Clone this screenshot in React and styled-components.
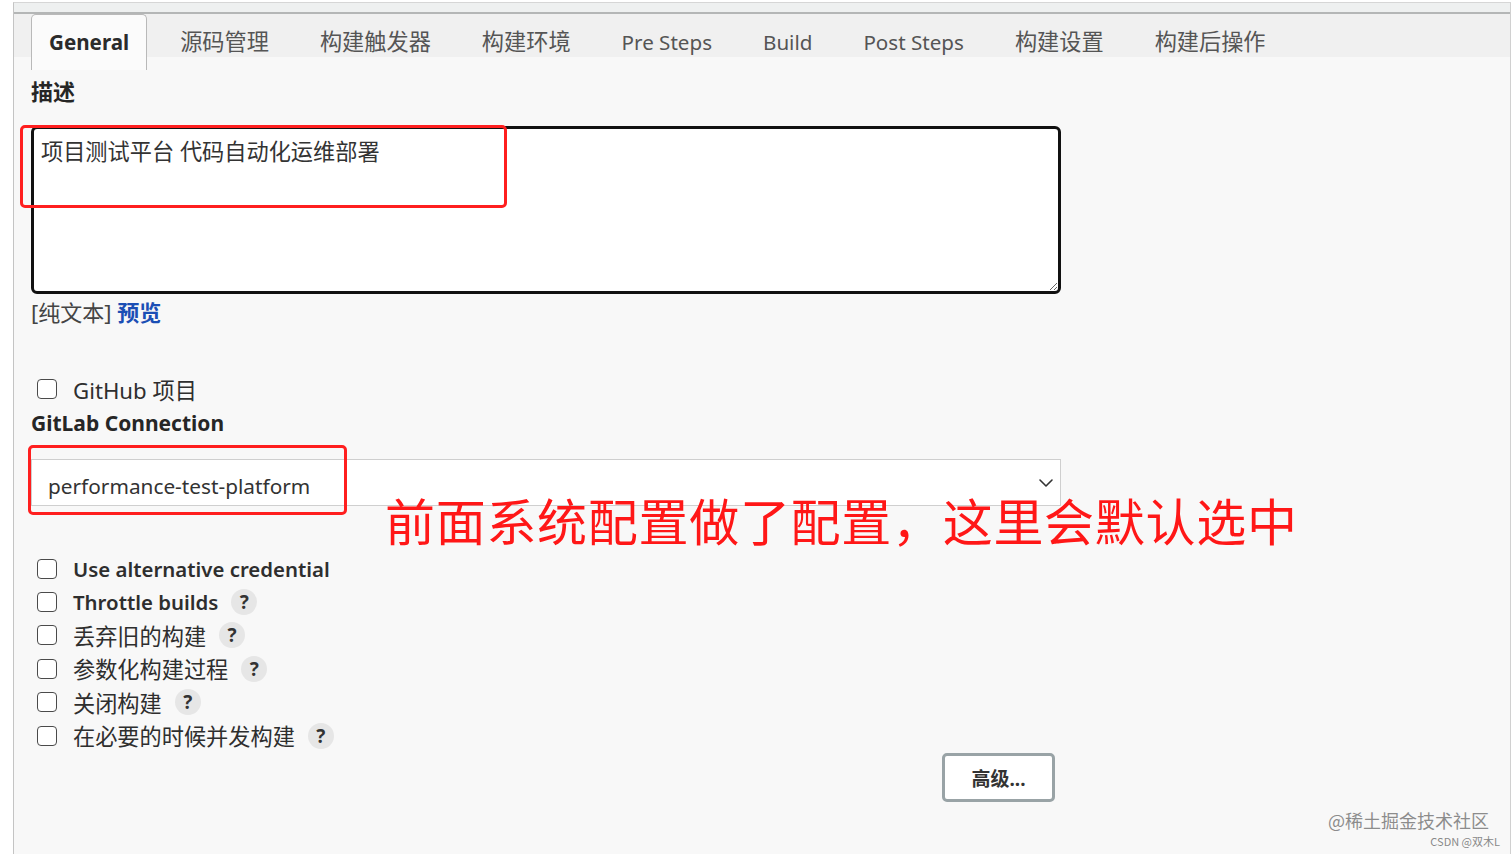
import React from "react";
import styled, { createGlobalStyle } from "styled-components";

const GlobalStyle = createGlobalStyle`
  html, body {
    margin: 0;
    padding: 0;
    background: #fff;
    overflow: hidden;
    height: 854px;
  }
  body {
    font-family: "Noto Sans", "Noto Sans CJK SC", sans-serif;
    color: #333;
  }
`;

const Frame = styled.div`
  margin: 2px 1px 0 13px;
  height: 852px;
  border-left: 1px solid #c4c4c4;
  border-right: 1px solid #d0d0d0;
  border-top: 1px solid #d6d6d6;
  background: #f8f8f8;
  position: relative;
  overflow: hidden;
`;

const TopStrip = styled.div`
  height: 9px;
  background: #eef0f0;
  border-bottom: 2px solid #b4b6b6;
`;

const TabBar = styled.div`
  display: flex;
  gap: 15px;
  height: 56px;
  padding-left: 17px;
  background: linear-gradient(#f0f0f0 0 43px, #f8f8f8 43px);
`;

const Tab = styled.div`
  padding: 12px 17px 0;
  height: 56px;
  box-sizing: border-box;
  font-size: ${(p) => (p.$latin ? 20.6 : 22.2)}px;
  line-height: 30px;
  color: ${(p) => (p.$active ? "#2b2b2b" : "#555")};
  font-weight: ${(p) => (p.$active ? 700 : 400)};
  background: ${(p) => (p.$active ? "#fbfbfb" : "transparent")};
  border: 1px solid ${(p) => (p.$active ? "#b9b9b9" : "transparent")};
  border-bottom: none;
  border-radius: 5px 5px 0 0;
  white-space: nowrap;
`;

const Content = styled.div`
  padding-left: 17px;
  width: 1030px;
`;

const SectionLabel = styled.div`
  font-size: ${(p) => p.$size || 22}px;
  font-weight: 700;
  line-height: 30px;
  color: #262626;
  margin-top: ${(p) => p.$mt || 0}px;
`;

const Field = styled.div`
  position: relative;
  margin-top: ${(p) => p.$mt || 0}px;
`;

const TextArea = styled.textarea`
  display: block;
  width: 100%;
  height: 168px;
  box-sizing: border-box;
  border: 3px solid #111;
  border-radius: 6px;
  background: #fff;
  padding: 8px 7px;
  font-family: "Noto Sans", "Noto Sans CJK SC", sans-serif;
  font-size: 22.2px;
  line-height: 30px;
  color: #333;
  outline: none;
  resize: vertical;
`;

const Highlight = styled.div`
  position: absolute;
  left: ${(p) => p.$left}px;
  top: ${(p) => p.$top}px;
  width: ${(p) => p.$w}px;
  height: ${(p) => p.$h}px;
  box-sizing: border-box;
  border: 3px solid #ff1f1f;
  border-radius: 5px;
  pointer-events: none;
`;

const Note = styled.div`
  margin-top: 3px;
  font-size: 22px;
  line-height: 30px;
  color: #444;
  a {
    color: #1b4fb5;
    font-weight: 700;
    text-decoration: none;
  }
`;

const CheckRow = styled.label`
  display: flex;
  align-items: center;
  height: ${(p) => p.$h || 33.4}px;
  margin-top: ${(p) => p.$mt || 0}px;
  padding-left: 6px;
  gap: 16px;
  font-size: ${(p) => (p.$strong ? 20.4 : 22.2)}px;
  color: #2e2e2e;
  font-weight: ${(p) => (p.$strong ? 600 : 400)};
`;

const Box = styled.span`
  width: 20px;
  height: 20px;
  box-sizing: border-box;
  border: 1.5px solid #4a4a4a;
  border-radius: 4px;
  background: #fff;
  flex: none;
`;

const Help = styled.span`
  width: 26px;
  height: 26px;
  border-radius: 50%;
  background: #e6e6e6;
  display: inline-flex;
  align-items: center;
  justify-content: center;
  font-size: 19px;
  font-weight: 700;
  color: #333;
  margin-left: -3px;
`;

const Select = styled.div`
  display: flex;
  align-items: center;
  justify-content: space-between;
  height: 47px;
  box-sizing: border-box;
  background: #fff;
  border: 1px solid #cfcfcf;
  padding: 6px 6px 0 16px;
  font-size: 20.8px;
  color: #333;
`;

const Annotation = styled.div`
  position: absolute;
  left: 354px;
  top: 32px;
  font-family: "Noto Sans CJK SC", sans-serif;
  font-size: 50px;
  line-height: 56px;
  color: #ff1717;
  white-space: nowrap;
  letter-spacing: 0.7px;
`;

const List = styled.div`
  margin-top: 46px;
`;

const ButtonRow = styled.div`
  display: flex;
  justify-content: flex-end;
  padding-right: 6px;
  margin-top: 1px;
`;

const Button = styled.button`
  width: 113px;
  height: 49px;
  border: 3px solid #99a3a6;
  border-radius: 5px;
  background: #fff;
  font-family: "Noto Sans", "Noto Sans CJK SC", sans-serif;
  font-size: 19px;
  font-weight: 700;
  color: #333;
`;

const Watermark = styled.div`
  position: absolute;
  right: ${(p) => p.$right}px;
  bottom: ${(p) => p.$bottom}px;
  font-family: "Noto Sans CJK SC", sans-serif;
  font-size: ${(p) => p.$size}px;
  color: ${(p) => p.$color};
  text-shadow: 0 0 1px #fff;
  white-space: nowrap;
`;

const tabs = [
  { label: "General", latin: true },
  { label: "源码管理" },
  { label: "构建触发器" },
  { label: "构建环境" },
  { label: "Pre Steps", latin: true },
  { label: "Build", latin: true },
  { label: "Post Steps", latin: true },
  { label: "构建设置" },
  { label: "构建后操作" },
];

const options = [
  { label: "Use alternative credential", strong: true },
  { label: "Throttle builds", strong: true, help: true },
  { label: "丢弃旧的构建", help: true },
  { label: "参数化构建过程", help: true },
  { label: "关闭构建", help: true },
  { label: "在必要的时候并发构建", help: true },
];

const Chevron = () => (
  <svg width="16" height="10" viewBox="0 0 16 10" fill="none" style={{ marginTop: -6 }}>
    <path d="M2 2l6 6 6-6" stroke="#333" strokeWidth="1.6" strokeLinecap="round" strokeLinejoin="round" />
  </svg>
);

export default function App() {
  return (
    <>
      <GlobalStyle />
      <Frame>
        <TopStrip />
        <TabBar>
          {tabs.map((t, i) => (
            <Tab key={t.label} $active={i === 0} $latin={t.latin}>
              {t.label}
            </Tab>
          ))}
        </TabBar>
        <Content>
          <SectionLabel $mt={6}>描述</SectionLabel>
          <Field $mt={20}>
            <TextArea defaultValue="项目测试平台 代码自动化运维部署" />
            <Highlight $left={-11} $top={-1} $w={487} $h={83} />
          </Field>
          <Note>
            [纯文本] <a href="#">预览</a>
          </Note>
          <CheckRow $h={30} $mt={47}>
            <Box />
            GitHub 项目
          </CheckRow>
          <SectionLabel $size={21} $mt={4}>
            GitLab Connection
          </SectionLabel>
          <Field $mt={21}>
            <Select>
              performance-test-platform
              <Chevron />
            </Select>
            <Highlight $left={-3} $top={-14} $w={319} $h={70} />
            <Annotation>前面系统配置做了配置，这里会默认选中</Annotation>
          </Field>
          <List>
            {options.map((o) => (
              <CheckRow key={o.label} $strong={o.strong}>
                <Box />
                {o.label}
                {o.help && <Help>?</Help>}
              </CheckRow>
            ))}
          </List>
          <ButtonRow>
            <Button>高级...</Button>
          </ButtonRow>
          <SectionLabel $mt={47}>源码管理</SectionLabel>
        </Content>
        <Watermark $right={21} $bottom={22} $size={18} $color="#8c8c8c">
          @稀土掘金技术社区
        </Watermark>
        <Watermark $right={10} $bottom={6} $size={11} $color="#888">
          CSDN @双木L
        </Watermark>
      </Frame>
    </>
  );
}
